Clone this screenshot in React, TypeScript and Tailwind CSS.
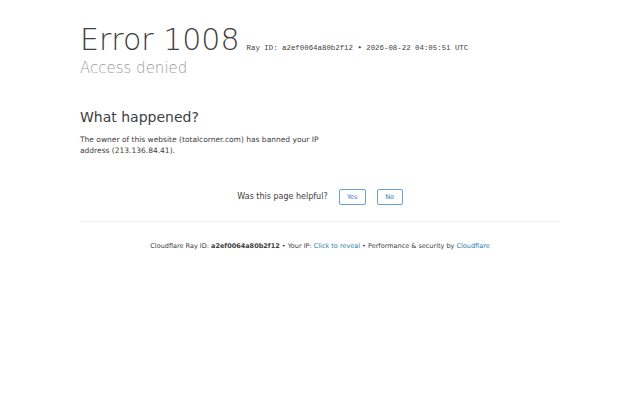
import React from 'react';

export default function App() {
  return (
    <div className="min-h-[400px] w-full bg-white text-[#404040] font-['DejaVu_Sans',sans-serif]">
      <div className="mx-auto w-[480px] pt-[20px]">
        <div className="flex items-baseline">
          <h1 className="text-[30px] font-extralight leading-[40px]">Error 1008</h1>
          <span className="ml-[7px] font-['Liberation_Mono',monospace] text-[7.4px] text-[#404040]">
            Ray ID: a2ef0064a80b2f12 <span className="font-['DejaVu_Sans',sans-serif]">•</span> 2026-08-22 04:05:51 UTC
          </span>
        </div>
        <h2 className="-mt-[2px] text-[15px] font-extralight leading-[20px] text-[#999999]">Access denied</h2>

        <section className="mt-[29px] w-[250px]">
          <h2 className="text-[14px] font-normal leading-[20px] text-[#404040]">What happened?</h2>
          <p className="mt-[7px] text-[7.5px] leading-[11px] text-[#404040]">
            The owner of this website (totalcorner.com) has banned your IP address (213.136.84.41).
          </p>
        </section>

        <div className="mt-[33px] flex items-center justify-center text-[8px]">
          <span className="mr-[11px]">Was this page helpful?</span>
          <button className="mr-[11px] h-[16px] w-[27px] rounded-[2px] border border-[#6a9fd6] text-[6.5px] leading-none text-[#2f7bbf]">Yes</button>
          <button className="h-[16px] w-[26px] rounded-[2px] border border-[#6a9fd6] text-[6.5px] leading-none text-[#2f7bbf]">No</button>
        </div>

        <div className="mt-[16px] h-px bg-[#f2f2f2]" />

        <p className="mt-[19px] text-center text-[6.5px] leading-[10px]">
          Cloudflare Ray ID: <strong className="font-bold">a2ef0064a80b2f12</strong> • Your IP:{' '}
          <span className="text-[#2c7cb0]">Click to reveal</span> • Performance &amp; security by{' '}
          <span className="text-[#2c7cb0]">Cloudflare</span>
        </p>
      </div>
    </div>
  );
}
